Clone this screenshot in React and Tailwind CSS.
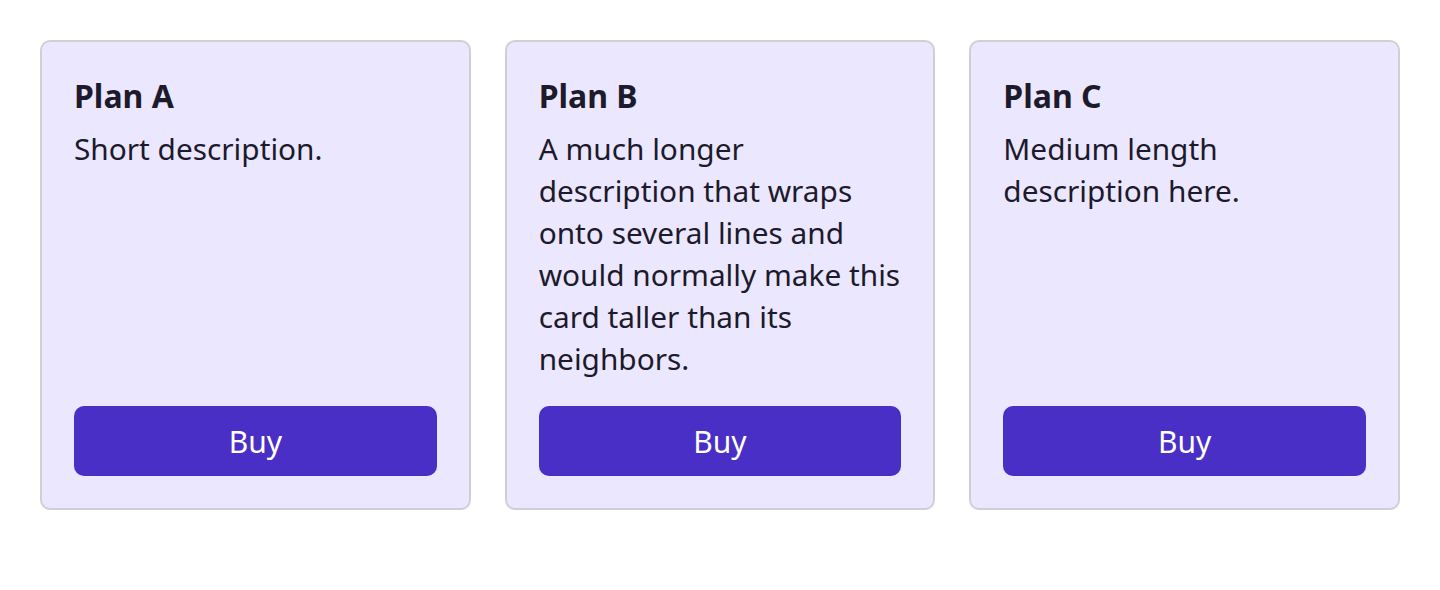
// Three pricing cards in a row, buttons pinned to the bottom so heights line up
const PLANS = [
  { name: 'Plan A', desc: 'Short description.' },
  {
    name: 'Plan B',
    desc: 'A much longer description that wraps onto several lines and would normally make this card taller than its neighbors.',
  },
  { name: 'Plan C', desc: 'Medium length description here.' },
]

function PlanCard({ name, desc }) {
  return (
    <div className="flex flex-col rounded-[10px] border-2 border-[#d0cfd6] bg-[#ebe7fe] p-8">
      <h3 className="text-[32px] font-bold leading-[44px] text-[#1c1a2b]">{name}</h3>
      <p className="mt-[10px] flex-1 text-[29.8px] leading-[42px] text-[#1c1a2b]">{desc}</p>
      <button className="mt-[26px] h-[70px] w-full rounded-[10px] bg-[#4a2fc6] text-[30px] text-white">Buy</button>
    </div>
  )
}

export default function App() {
  return (
    <div className="min-h-[590px] bg-white px-10 pt-10 font-['Noto_Sans',sans-serif]">
      <div className="grid grid-cols-3 gap-[34px]">
        {PLANS.map((p) => (
          <PlanCard key={p.name} {...p} />
        ))}
      </div>
    </div>
  )
}
